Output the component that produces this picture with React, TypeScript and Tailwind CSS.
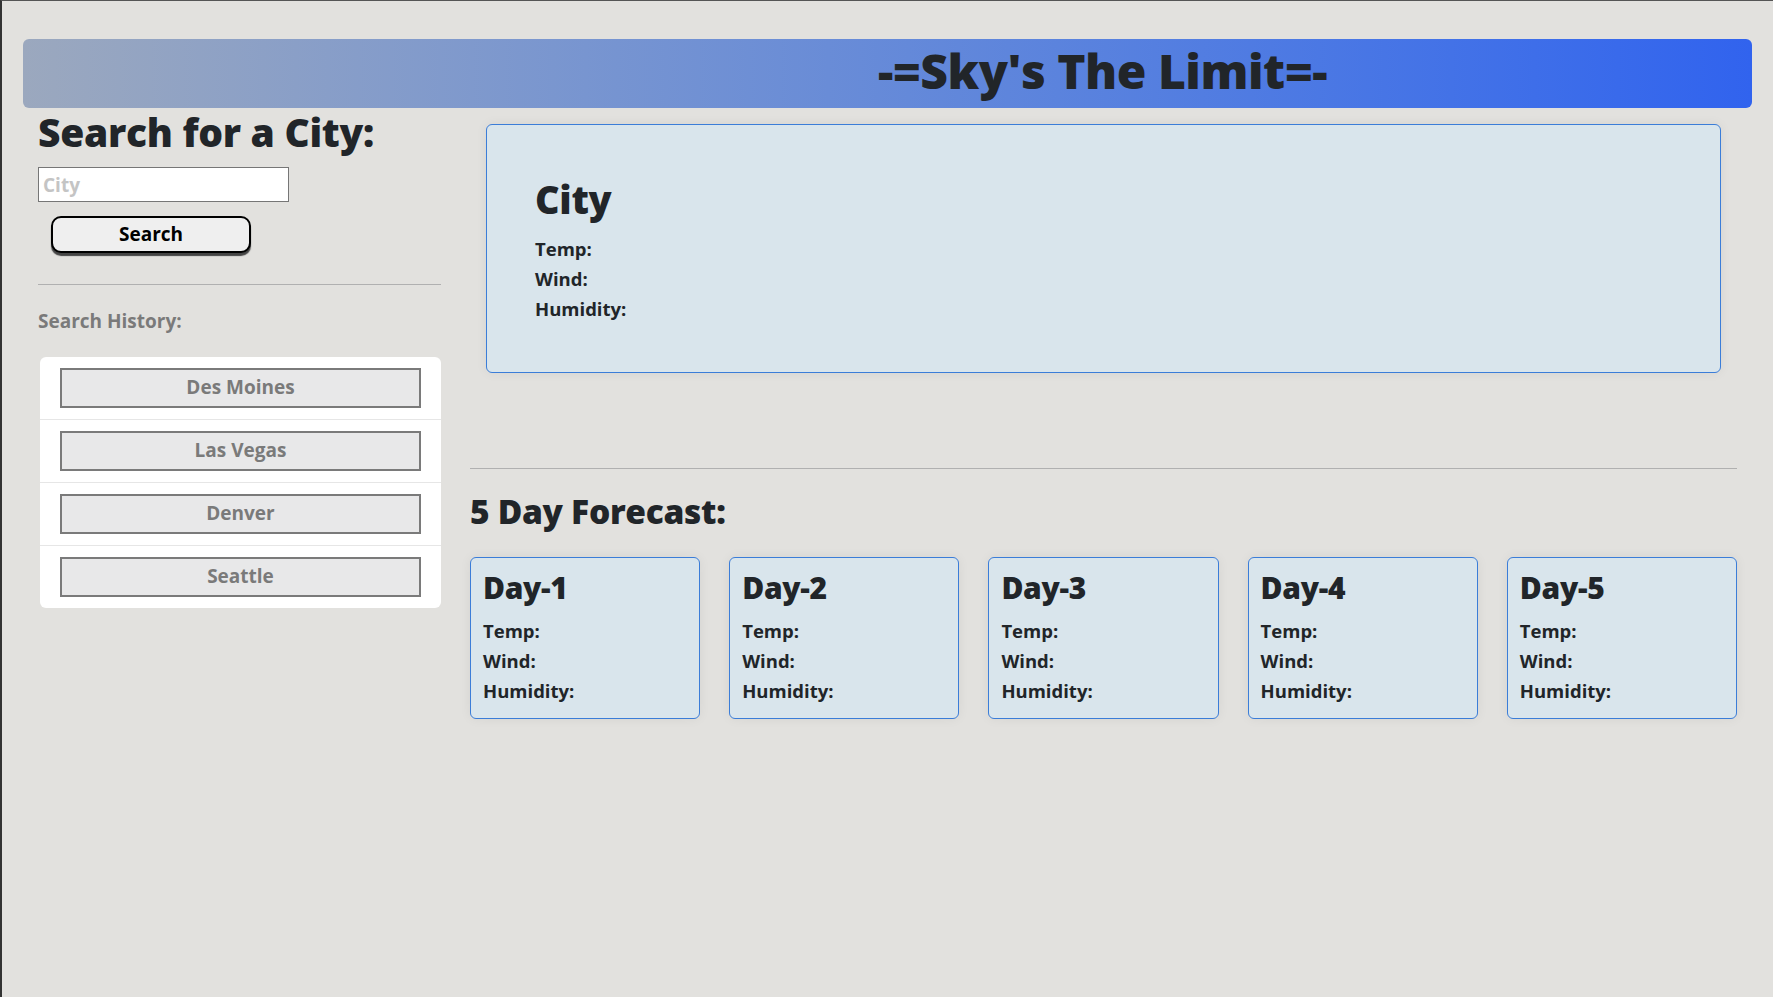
import React from 'react';

const history = ['Des Moines', 'Las Vegas', 'Denver', 'Seattle'];
const days = ['Day-1', 'Day-2', 'Day-3', 'Day-4', 'Day-5'];

const Stats: React.FC<{ className?: string }> = ({ className }) => (
  <div className={className}>
    <p className="h-[30px] leading-[30px]">Temp:</p>
    <p className="h-[30px] leading-[30px]">Wind:</p>
    <p className="h-[30px] leading-[30px]">Humidity:</p>
  </div>
);

const App: React.FC = () => {
  return (
    <div
      className="min-h-screen bg-[#e2e1de] border-t border-t-[#555] border-l-2 border-l-[#333] text-[#212529] pb-10"
      style={{ fontFamily: '"Open Sans", Lato, sans-serif' }}
    >
      {/* Header */}
      <header className="mx-[21px] mt-[38px] h-[69px] rounded-md bg-gradient-to-r from-[#9ba8be] to-[#3163ee] flex items-center justify-center pl-[430px] pb-[6px]">
        <h1 className="text-[48px] font-extrabold leading-none tracking-[-0.5px]">-=Sky's The Limit=-</h1>
      </header>

      <main className="flex pl-[36px] pr-[36px]">
        {/* Left column */}
        <aside className="w-[403px] shrink-0">
          <h2 className="text-[39px] font-extrabold leading-[48px] tracking-[-0.3px]">Search for a City:</h2>
          <input
            type="text"
            placeholder="City"
            className="block mt-[11px] w-[251px] h-[35px] bg-white border border-[#767676] px-1 text-[19px] font-bold placeholder:text-[#c4c4c4]"
          />
          <button className="block mt-[14px] ml-[13px] w-[200px] h-[37px] rounded-[10px] border-2 border-black bg-[#efefef] shadow-[0_3px_1px_#444] text-[19px] font-bold text-black leading-none">
            Search
          </button>
          <hr className="mt-[31px] border-0 border-t border-[#b0b0b0]" />
          <p className="mt-[24px] text-[19px] font-bold text-[#7a7a7a] leading-[24px]">Search History:</p>
          <ul className="mt-[24px] ml-[2px] bg-white rounded-md divide-y divide-[#e6e6e6]">
            {history.map(city => (
              <li key={city} className="px-[20px] py-[11px]">
                <button className="w-full h-[40px] border-2 border-[#7a7a7a] bg-[#e8e8e9] text-[19px] font-bold text-[#7a7a7a] leading-none pb-[2px]">
                  {city}
                </button>
              </li>
            ))}
          </ul>
        </aside>

        {/* Right column */}
        <section className="flex-1 ml-[29px]">
          <div className="mx-[16px] mt-[16px] h-[249px] rounded-md border border-[#3b7dd8] bg-[#d9e5ec] shadow-[0_0_12px_rgba(0,0,0,0.06)] pl-[48px] pt-[50px]">
            <h2 className="text-[38px] font-extrabold leading-[48px] tracking-[-0.3px]">City</h2>
            <Stats className="mt-[11px] text-[18.5px] font-bold" />
          </div>

          <hr className="mt-[95px] border-0 border-t border-[#b0b0b0]" />
          <h2 className="mt-[22px] text-[33.5px] font-extrabold leading-[40px] tracking-[-0.3px]">5 Day Forecast:</h2>

          <div className="mt-[26px] grid grid-cols-5 gap-[29px]">
            {days.map(day => (
              <div
                key={day}
                className="h-[162px] rounded-md border border-[#3b7dd8] bg-[#d9e5ec] shadow-[0_0_12px_rgba(0,0,0,0.06)] px-[12px] pt-[12px]"
              >
                <h3 className="text-[30px] font-extrabold leading-[36px] tracking-[-0.3px]">{day}</h3>
                <Stats className="mt-[10px] text-[18.5px] font-bold" />
              </div>
            ))}
          </div>
        </section>
      </main>
    </div>
  );
};

export default App;
